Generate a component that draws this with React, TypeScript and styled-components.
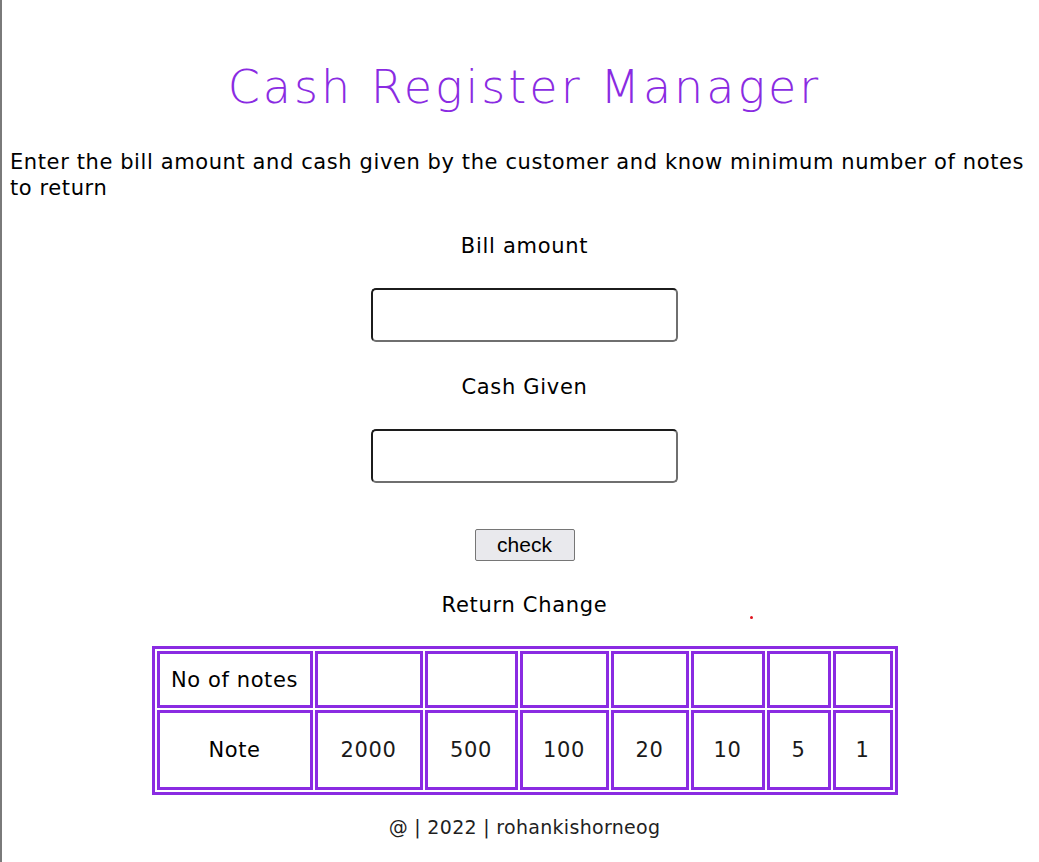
import React from 'react'
import styled, { createGlobalStyle } from 'styled-components'

const GlobalStyle = createGlobalStyle`
  html, body {
    margin: 0;
    padding: 0;
    background: #ffffff;
  }
  body {
    font-family: "DejaVu Sans", "Liberation Sans", sans-serif;
    color: #000000;
  }
  * {
    box-sizing: border-box;
  }
`

const Page = styled.div`
  min-height: 100vh;
  border-left: 2px solid #7a7a7a;
  padding: 0 0 20px 8px;
  display: flex;
  flex-direction: column;
  align-items: center;
`

const Title = styled.h1`
  margin: 59px 0 0;
  font-size: 46px;
  line-height: 56px;
  font-weight: 300;
  letter-spacing: 3px;
  color: blueviolet;
  text-align: center;
`

const Intro = styled.p`
  align-self: stretch;
  margin: 34px 0 0;
  font-size: 21px;
  line-height: 26px;
  letter-spacing: 0.6px;
  text-align: left;
`

const Label = styled.label<{ $gap: number }>`
  display: block;
  margin-top: ${props => props.$gap}px;
  font-size: 21px;
  line-height: 25px;
  letter-spacing: 0.7px;
  text-align: center;
`

const AmountInput = styled.input`
  display: block;
  margin-top: 29px;
  width: 307px;
  height: 54px;
  border-style: solid;
  border-width: 2px;
  border-color: #1c1c1c #6f6f6f #6f6f6f #1c1c1c;
  border-radius: 5px;
  background: #ffffff;
  font-size: 20px;
  padding: 0 10px;
`

const CheckButton = styled.button`
  margin-top: 46px;
  width: 100px;
  height: 32px;
  padding: 0;
  font-family: "Liberation Sans", Arial, sans-serif;
  font-size: 21px;
  line-height: 26px;
  color: #000000;
  background: #e9e9ed;
  border: 1px solid #767676;
  border-radius: 2px;
`

const ChangeBlock = styled.div`
  position: relative;
  align-self: stretch;
  display: flex;
  justify-content: center;
`

const ErrorDot = styled.span`
  position: absolute;
  left: calc(50% + 225px);
  top: 55px;
  width: 3px;
  height: 3px;
  border-radius: 50%;
  background: #e0141e;
`

const NotesTable = styled.table`
  margin-top: 28px;
  width: 746px;
  table-layout: fixed;
  border-collapse: separate;
  border-spacing: 2px;
  border: 3px solid blueviolet;
`

const Col = styled.col<{ $w: number }>`
  width: ${props => props.$w}px;
`

const Row = styled.tr<{ $h: number }>`
  height: ${props => props.$h}px;
`

const HeadCell = styled.th`
  border: 3px solid blueviolet;
  padding: 0;
  font-size: 21px;
  font-weight: 400;
  letter-spacing: 0.6px;
  text-align: center;
  vertical-align: middle;
`

const Cell = styled.td`
  border: 3px solid blueviolet;
  padding: 0;
  font-size: 21px;
  letter-spacing: 0.6px;
  color: #1a1a1a;
  text-align: center;
  vertical-align: middle;
`

const Footer = styled.footer`
  margin-top: 21px;
  font-size: 19px;
  line-height: 22px;
  letter-spacing: 0.3px;
  color: #1f1f1f;
  text-align: center;
`

const notes = [2000, 500, 100, 20, 10, 5, 1]
const colWidths = [156, 108, 93, 89, 78, 74, 64, 60]

export default function App() {
  return (
    <>
      <GlobalStyle />
      <Page>
        <Title>Cash Register Manager</Title>
        <Intro>
          Enter the bill amount and cash given by the customer and know minimum number of notes to return
        </Intro>

        <Label $gap={33} htmlFor="bill">Bill amount</Label>
        <AmountInput id="bill" type="number" />

        <Label $gap={33} htmlFor="cash">Cash Given</Label>
        <AmountInput id="cash" type="number" />

        <CheckButton>check</CheckButton>

        <ChangeBlock>
          <Label $gap={32}>Return Change</Label>
          <ErrorDot />
        </ChangeBlock>

        <NotesTable>
          <colgroup>
            {colWidths.map((w, i) => (
              <Col key={i} $w={w} />
            ))}
          </colgroup>
          <tbody>
            <Row $h={57}>
              <HeadCell>No of notes</HeadCell>
              {notes.map(n => (
                <Cell key={n}></Cell>
              ))}
            </Row>
            <Row $h={80}>
              <HeadCell>Note</HeadCell>
              {notes.map(n => (
                <Cell key={n}>{n}</Cell>
              ))}
            </Row>
          </tbody>
        </NotesTable>

        <Footer>@ | 2022 | rohankishorneog</Footer>
      </Page>
    </>
  )
}
